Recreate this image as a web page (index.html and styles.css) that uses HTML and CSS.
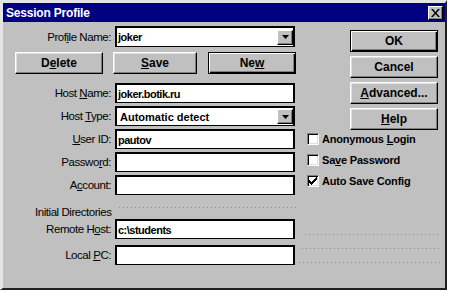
FILE: index.html
```html
<!DOCTYPE html>
<html>
<head>
<meta charset="utf-8">
<link rel="stylesheet" href="styles.css">
</head>
<body>
<div class="win">
  <div class="title">
    <span class="title-text">Session Profile</span>
    <div class="close"><svg width="9" height="8" viewBox="0 0 9 8"><path d="M0 0h2l2.5 3L7 0h2L5.5 4L9 8H7L4.5 5L2 8H0l3.5-4z" fill="#000"/></svg></div>
  </div>
  <div class="body">
    <div class="form">
      <div class="row r-profile">
        <label class="lbl">Prof<u>i</u>le Name:</label>
        <div class="field combo"><span class="val">joker</span><span class="drop"><svg width="7" height="4" viewBox="0 0 7 4"><path d="M0 0h7L3.5 4z" fill="#000"/></svg></span></div>
      </div>
      <div class="btnrow">
        <div class="btn b-del"><span>D<u>e</u>lete</span></div>
        <div class="btn b-save"><span><u>S</u>ave</span></div>
        <div class="btn b-new def"><span>Ne<u>w</u></span></div>
      </div>
      <div class="row r-first">
        <label class="lbl">Host <u>N</u>ame:</label>
        <div class="field"><span class="val">joker.botik.ru</span></div>
      </div>
      <div class="row">
        <label class="lbl">Host <u>T</u>ype:</label>
        <div class="field combo"><span class="val wide">Automatic detect</span><span class="drop"><svg width="7" height="4" viewBox="0 0 7 4"><path d="M0 0h7L3.5 4z" fill="#000"/></svg></span></div>
      </div>
      <div class="row">
        <label class="lbl"><u>U</u>ser ID:</label>
        <div class="field"><span class="val">pautov</span></div>
      </div>
      <div class="row">
        <label class="lbl">Passwo<u>r</u>d:</label>
        <div class="field"></div>
      </div>
      <div class="row">
        <label class="lbl">A<u>c</u>count:</label>
        <div class="field"></div>
      </div>
      <div class="section"><span class="sec-lbl">Initial Directories</span><span class="leader"></span></div>
      <div class="row r-remote">
        <label class="lbl">Remote H<u>o</u>st:</label>
        <div class="field"><span class="val">c:\students</span></div>
      </div>
      <div class="row r-local">
        <label class="lbl">Local <u>P</u>C:</label>
        <div class="field"></div>
      </div>
    </div>
    <div class="side">
      <div class="btn sbtn def"><span>OK</span></div>
      <div class="btn sbtn"><span>Cancel</span></div>
      <div class="btn sbtn"><span><u>A</u>dvanced...</span></div>
      <div class="btn sbtn"><span><u>H</u>elp</span></div>
      <div class="checks">
        <div class="chk"><span class="box"></span><span class="ctext">Anonymous <u>L</u>ogin</span></div>
        <div class="chk"><span class="box"></span><span class="ctext">Sa<u>v</u>e Password</span></div>
        <div class="chk"><span class="box"><svg width="9" height="8" viewBox="0 0 9 8"><path d="M0 3h1v1h1v1h1v-1h1v-1h1v-1h1v-1h1v-1h1v3h-1v1h-1v1h-1v1h-1v1h-1v1h-1v-1h-1v-1h-1z" fill="#000"/></svg></span><span class="ctext">Auto Save Config</span></div>
      </div>
      <div class="dots d1"></div>
      <div class="dots d2"></div>
      <div class="dots d3"></div>
    </div>
  </div>
</div>
</body>
</html>
```

FILE: styles.css
```css
html, body {
  margin: 0;
  padding: 0;
  background: #ffffff;
}
body {
  width: 450px;
  height: 292px;
  overflow: hidden;
  font-family: "Liberation Sans", Arial, sans-serif;
}
.win {
  width: 442px;
  height: 285px;
  border-left: 3px solid #e4e4e4;
  border-top: 3px solid #e4e4e4;
  border-right: 2px solid #202020;
  border-bottom: 2px solid #202020;
  background: #c0c0c0;
  display: flex;
  flex-direction: column;
}
.title {
  height: 19px;
  background: #000080;
  display: flex;
  align-items: center;
  justify-content: space-between;
  padding: 0 2px 0 3px;
}
.title-text {
  color: #fff;
  font-weight: bold;
  font-size: 12px;
  letter-spacing: -0.2px;
}
.close {
  width: 13px;
  height: 12px;
  background: #c0c0c0;
  border: 1px solid;
  border-color: #fff #000 #000 #fff;
  box-shadow: inset -1px -1px #808080;
  display: flex;
  align-items: center;
  justify-content: center;
}
.body {
  display: flex;
  flex: 1;
}
.form {
  width: 293px;
  display: flex;
  flex-direction: column;
  padding-top: 4px;
}
.row {
  display: grid;
  grid-template-columns: 108px 180px;
  column-gap: 4px;
  height: 20px;
  margin-top: 3px;
  align-items: center;
}
.r-profile {
  height: 21px;
  margin-top: 0;
}
.r-first { margin-top: 9px; }
.r-remote { margin-top: 0; }
.r-local { margin-top: 6px; }
.lbl {
  display: block;
  font-size: 11.5px;
  letter-spacing: -0.45px;
  color: #000;
  text-align: right;
  white-space: nowrap;
}
.field {
  box-sizing: border-box;
  height: 100%;
  background: #fff;
  border: 1px solid #000;
  border-width: 2px 2px 1px 2px;
  display: flex;
  align-items: center;
  padding-left: 1px;
}
.val {
  font-size: 11px;
  font-weight: bold;
  letter-spacing: -0.5px;
  color: #000;
  white-space: pre;
}
.val.wide { letter-spacing: 0; padding-left: 2px; }
.combo {
  justify-content: space-between;
}
.drop {
  width: 14px;
  height: 13px;
  background: #c0c0c0;
  border: 1px solid;
  border-color: #fff #000 #000 #fff;
  box-shadow: inset -1px -1px #808080;
  display: flex;
  align-items: center;
  justify-content: center;
}
.btnrow {
  display: flex;
  margin-top: 5px;
  padding-left: 12px;
  height: 22px;
}
.btn {
  box-sizing: border-box;
  height: 22px;
  background: #c0c0c0;
  border: 1px solid;
  border-color: #fff #000 #000 #fff;
  box-shadow: inset -1px -1px #808080, inset 1px 1px #dfdfdf;
  font-size: 12px;
  font-weight: bold;
  color: #000;
  display: flex;
  align-items: center;
  justify-content: center;
  white-space: pre;
}
.btn.def {
  border: 1px solid #000;
  box-shadow: inset 1px 1px #fff, inset -1px -1px #000, inset -2px -2px #808080;
}
.b-del { width: 88px; }
.b-save { width: 84px; margin-left: 10px; }
.b-new { width: 88px; margin-left: 11px; }
.section {
  height: 21px;
  margin-top: 3px;
  display: flex;
  align-items: center;
  padding-left: 32px;
}
.sec-lbl {
  font-size: 11.5px;
  letter-spacing: -0.45px;
  color: #000;
  padding-top: 6px;
  white-space: nowrap;
}
.leader {
  flex: 1;
  height: 1px;
  margin: 0 0 3px 8px;
  background: repeating-linear-gradient(90deg, #8a8a8a 0 1px, transparent 1px 4px);
}
.side {
  flex: 1;
  display: flex;
  flex-direction: column;
  padding-top: 8px;
}
.sbtn {
  width: 88px;
  margin-left: 54px;
  margin-bottom: 4px;
}
.checks {
  margin-top: -1px;
  padding-left: 11px;
  display: flex;
  flex-direction: column;
  gap: 9px;
}
.chk {
  display: flex;
  align-items: center;
  height: 12px;
}
.box {
  box-sizing: border-box;
  width: 12px;
  height: 12px;
  background: #fff;
  border: 1px solid;
  border-color: #808080 #fff #fff #808080;
  box-shadow: inset 1px 1px #000, inset -1px -1px #dfdfdf;
  display: flex;
  align-items: center;
  justify-content: center;
  margin-right: 3px;
}
.ctext {
  font-size: 11px;
  font-weight: bold;
  letter-spacing: -0.2px;
  color: #000;
  white-space: pre;
}
.dots {
  height: 1px;
  margin-right: 4px;
  background: repeating-linear-gradient(90deg, #8a8a8a 0 1px, transparent 1px 4px);
}
.d1 { margin-top: 47px; margin-left: 9px; }
.d2 { margin-top: 13px; margin-left: 6px; }
.d3 { margin-top: 13px; margin-left: 3px; }
```
